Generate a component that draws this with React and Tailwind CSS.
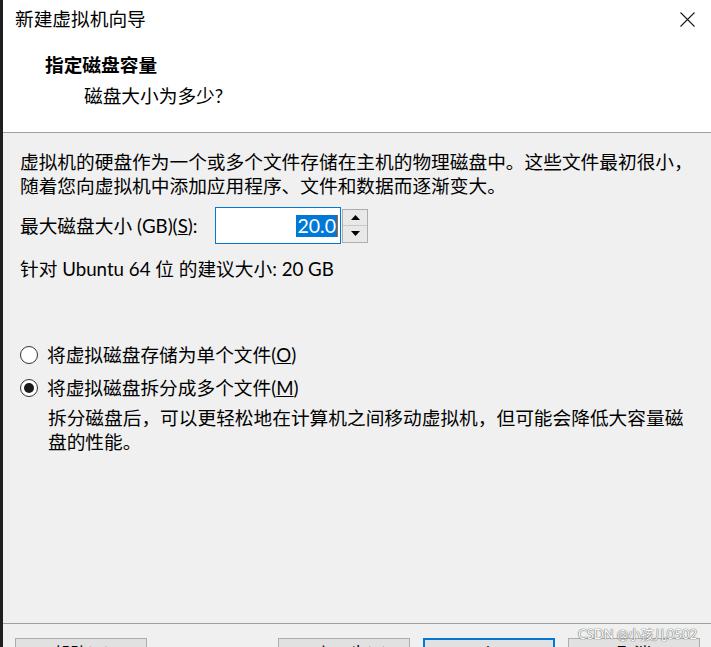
import React from "react";

const font = "font-['Lato','Noto_Sans_CJK_SC',sans-serif]";

function Radio({ checked }) {
  return (
    <span className="flex h-[18px] w-[18px] shrink-0 items-center justify-center rounded-full border border-[#333333] bg-white">
      {checked && <span className="h-[10px] w-[10px] rounded-full bg-[#1a1a1a]" />}
    </span>
  );
}

function Spinner() {
  return (
    <div className="ml-px flex h-[34px] w-[26px] flex-col border border-[#adadad] bg-[#e8e8e8]">
      <div className="flex flex-1 items-center justify-center border-b border-[#c8c8c8]">
        <svg width="9" height="5" viewBox="0 0 9 5">
          <path d="M0 5 L4.5 0 L9 5 Z" fill="#000" />
        </svg>
      </div>
      <div className="flex flex-1 items-center justify-center">
        <svg width="9" height="5" viewBox="0 0 9 5">
          <path d="M0 0 L4.5 5 L9 0 Z" fill="#000" />
        </svg>
      </div>
    </div>
  );
}

function FooterButton({ children, primary }) {
  return (
    <div
      className={`flex h-[34px] w-[132px] shrink-0 justify-center bg-[#e1e1e1] pt-[3px] text-[17px] leading-[24px] text-black ${
        primary ? "border-2 border-[#0078d7]" : "border border-[#adadad]"
      }`}
    >
      {children}
    </div>
  );
}

export default function App() {
  return (
    <div className={`relative flex h-[647px] w-[711px] overflow-hidden bg-[#f0f0f0] text-black ${font}`}>
      <div className="w-[3px] shrink-0 bg-[#1f1f1f]" />
      <div className="flex min-w-0 flex-1 flex-col">
        {/* header */}
        <div className="h-[133px] shrink-0 border-b border-[#a0a0a0] bg-white">
          <div className="flex h-[38px] items-center justify-between pl-[12px] pr-[16px]">
            <span className="text-[18.7px] leading-[24px]">新建虚拟机向导</span>
            <svg width="15" height="15" viewBox="0 0 15 15">
              <path d="M0.5 0.5 L14.5 14.5 M14.5 0.5 L0.5 14.5" stroke="#1a1a1a" strokeWidth="1.1" />
            </svg>
          </div>
          <div className="mt-[15px] pl-[42px] text-[18.7px] font-bold leading-[24px]">指定磁盘容量</div>
          <div className="mt-[7px] pl-[81px] text-[18.7px] leading-[24px]">磁盘大小为多少?</div>
        </div>

        {/* body */}
        <div className="h-[490px] shrink-0 pl-[17px] pt-[18px] text-[18.7px]">
          <p className="leading-[23.5px]">
            虚拟机的硬盘作为一个或多个文件存储在主机的物理磁盘中。这些文件最初很小，
            <br />
            随着您向虚拟机中添加应用程序、文件和数据而逐渐变大。
          </p>

          <div className="mt-[9px] flex h-[37px] items-center">
            <span className="w-[195px] shrink-0 leading-[24px]">
              最大磁盘大小 (GB)(<span className="underline">S</span>):
            </span>
            <div className="flex h-[37px] w-[126px] items-center justify-end border border-[#0078d7] bg-white pr-[2px]">
              <span className="bg-[#0078d7] px-px text-[19.5px] leading-[22px] text-white">20.0</span>
              <span className="h-[22px] w-px bg-[#c06020]" />
            </div>
            <Spinner />
          </div>

          <div className="mt-[13px] leading-[24px]">针对 Ubuntu 64 位 的建议大小: 20 GB</div>

          <div className="mt-[62px] flex h-[24px] items-center gap-[9px]">
            <Radio />
            <span className="leading-[24px]">
              将虚拟磁盘存储为单个文件(<span className="underline">O</span>)
            </span>
          </div>
          <div className="mt-[9px] flex h-[24px] items-center gap-[9px]">
            <Radio checked />
            <span className="leading-[24px]">
              将虚拟磁盘拆分成多个文件(<span className="underline">M</span>)
            </span>
          </div>
          <p className="mt-[6px] pl-[28px] leading-[24px]">
            拆分磁盘后，可以更轻松地在计算机之间移动虚拟机，但可能会降低大容量磁
            <br />
            盘的性能。
          </p>
        </div>

        {/* footer */}
        <div className="flex shrink-0 border-t border-[#a0a0a0] pl-[12px] pr-[11px] pt-[14px]">
          <FooterButton>帮助(H)</FooterButton>
          <div className="flex-1" />
          <div className="flex gap-[13px]">
            <FooterButton>&lt; 上一步(B)</FooterButton>
            <FooterButton primary>下一步(N) &gt;</FooterButton>
            <FooterButton>取消</FooterButton>
          </div>
        </div>
      </div>

      <div className="absolute right-[14px] top-[627px] text-[13px] leading-[14px] text-white [text-shadow:0_0_1px_#555,0_0_1px_#555]">
        CSDN @小孩儿0502
      </div>
    </div>
  );
}
